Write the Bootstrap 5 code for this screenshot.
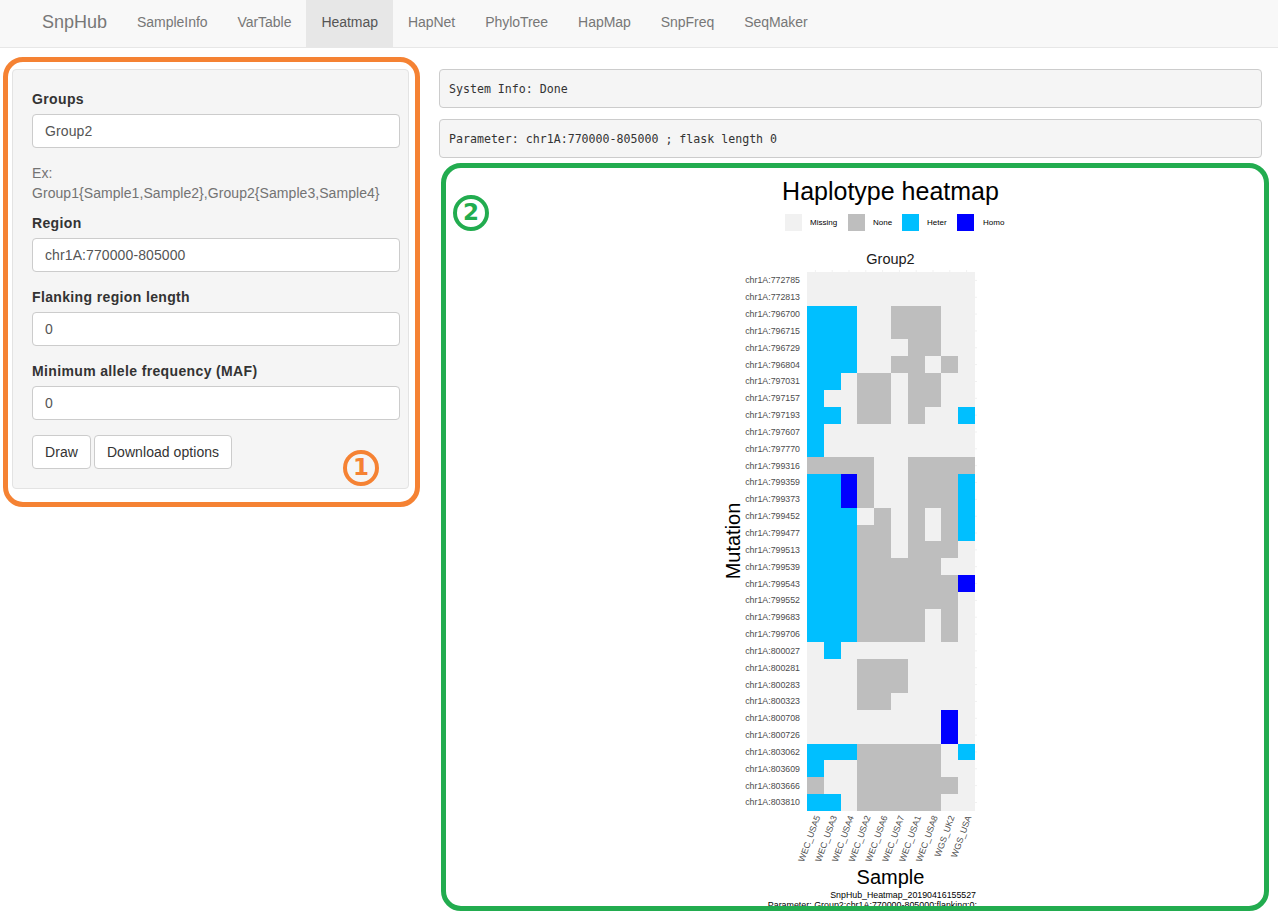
<!DOCTYPE html>
<html lang="en">
<head>
  <meta charset="UTF-8">
  <title>SnpHub - Heatmap</title>
  <meta name="viewport" content="width=device-width, initial-scale=1">
  <link href="https://cdn.jsdelivr.net/npm/bootstrap@5.3.3/dist/css/bootstrap.min.css" rel="stylesheet">
  <style>
    body {
      font-family: "Liberation Sans", Arial, sans-serif;
      font-size: 14px;
      line-height: 20px;
      color: #333;
      background: #fff;
      overflow: hidden;
    }
    .snp-nav {
      height: 48px;
      padding: 0 0 0 27px;
      background: #f8f8f8;
      border-bottom: 1px solid #e7e7e7;
      align-items: stretch;
      justify-content: flex-start;
    }
    .snp-nav .navbar-brand {
      margin: 0;
      padding: 12px 15px;
      font-size: 18px;
      line-height: 20px;
      color: #777;
    }
    .snp-nav .navbar-nav { align-items: stretch; }
    .navbar-expand.snp-nav .navbar-nav .nav-link {
      padding: 12px 15px 15px;
      height: 47px;
      line-height: 20px;
      letter-spacing: -.04px;
      color: #777;
    }
    .navbar-expand.snp-nav .navbar-nav .nav-link.active {
      color: #555;
      background: #e7e7e7;
    }
    .page-wrap {
      padding: 21px 16px 0 12px;
      gap: 30px;
    }
    .side-col { width: 397px; flex: none; }
    .main-col { flex: 1 1 0; min-width: 0; }
    .side-well {
      height: 420px;
      padding: 19px 8px 19px 19px;
      background: #f5f5f5;
      border: 1px solid #e3e3e3;
      border-radius: 4px;
    }
    .side-well .form-label {
      display: block;
      margin: 0 0 5px;
      font-weight: 700;
      line-height: 20px;
      letter-spacing: .36px;
    }
    .side-well .form-control {
      height: 34px;
      padding: 6px 12px;
      font-size: 14px;
      line-height: 20px;
      letter-spacing: .1px;
      color: #555;
      border: 1px solid #ccc;
      border-radius: 4px;
    }
    .field-gap { margin-bottom: 15px; }
    .help-note {
      margin: 15px 0 10px;
      color: #737373;
      line-height: 20px;
      letter-spacing: .06px;
    }
    .btn-row { gap: 3px; }
    .plain-btn {
      height: 34px;
      padding: 6px 12px;
      font-size: 14px;
      line-height: 20px;
      letter-spacing: .06px;
      color: #333;
      background: #fff;
      border: 1px solid #ccc;
      border-radius: 4px;
    }
    .info-box {
      height: 39px;
      margin: 0 0 11px;
      padding: 9px;
      font-family: "DejaVu Sans Mono", "Liberation Mono", monospace;
      font-size: 11.6px;
      line-height: 20px;
      color: #333;
      background: #f5f5f5;
      border: 1px solid #ccc;
      border-radius: 4px;
      overflow: hidden;
    }
    .plot-wrap { height: 748px; margin-top: -6px; }
    .plot-wrap svg { display: block; }
    .plot-wrap text { font-family: "Liberation Sans", Arial, sans-serif; }
    .note-frame {
      position: absolute;
      border-style: solid;
      border-width: 5px;
      border-radius: 20px;
      pointer-events: none;
    }
    .frame-orange { top: -13px; left: -10px; right: -12px; bottom: -19px; border-color: #f58233; }
    .frame-green { top: 0; left: 2px; right: -7px; bottom: 0; border-color: #22ac4f; }
    .note-num {
      position: absolute;
      width: 36px;
      height: 36px;
      border: 4px solid;
      border-radius: 50%;
      font-family: "DejaVu Sans", sans-serif;
      font-weight: 700;
      font-size: 23px;
      line-height: 27px;
      text-align: center;
    }
    .num-orange { left: 330px; top: 380px; color: #f58233; }
    .num-green { left: 14px; top: 32px; color: #22ac4f; }
  </style>
</head>
<body>

<nav class="navbar navbar-expand snp-nav">
  <a class="navbar-brand" href="#">SnpHub</a>
  <ul class="navbar-nav">
    <li class="nav-item"><a class="nav-link" href="#">SampleInfo</a></li>
    <li class="nav-item"><a class="nav-link" href="#">VarTable</a></li>
    <li class="nav-item"><a class="nav-link active" href="#">Heatmap</a></li>
    <li class="nav-item"><a class="nav-link" href="#">HapNet</a></li>
    <li class="nav-item"><a class="nav-link" href="#">PhyloTree</a></li>
    <li class="nav-item"><a class="nav-link" href="#">HapMap</a></li>
    <li class="nav-item"><a class="nav-link" href="#">SnpFreq</a></li>
    <li class="nav-item"><a class="nav-link" href="#">SeqMaker</a></li>
  </ul>
</nav>

<div class="d-flex page-wrap">
  <div class="side-col">
    <div class="side-well position-relative">
      <form>
        <label class="form-label" for="groups">Groups</label>
        <input type="text" id="groups" class="form-control" value="Group2">
        <div class="help-note">Ex:<br>Group1{Sample1,Sample2},Group2{Sample3,Sample4}</div>

        <div class="field-gap">
          <label class="form-label" for="region">Region</label>
          <input type="text" id="region" class="form-control" value="chr1A:770000-805000">
        </div>
        <div class="field-gap">
          <label class="form-label" for="flanking">Flanking region length</label>
          <input type="text" id="flanking" class="form-control" value="0">
        </div>
        <div class="field-gap">
          <label class="form-label" for="maf">Minimum allele frequency (MAF)</label>
          <input type="text" id="maf" class="form-control" value="0">
        </div>
        <div class="d-flex btn-row">
          <button type="button" class="btn plain-btn">Draw</button>
          <button type="button" class="btn plain-btn">Download options</button>
        </div>
      </form>
      <div class="note-frame frame-orange"></div>
      <div class="note-num num-orange">1</div>
    </div>
  </div>

  <div class="main-col">
    <pre class="info-box">System Info: Done</pre>
    <pre class="info-box">Parameter: chr1A:770000-805000 ; flask length 0</pre>
    <div class="plot-wrap position-relative">
      <!-- viewBox uses page coordinates, easier to line up with the plot -->
      <svg id="heatmap" width="823" height="748" viewBox="439 163 823 748"></svg>
      <div class="note-frame frame-green"></div>
      <div class="note-num num-green">2</div>
    </div>
  </div>
</div>

<script>
  // . missing, n none, h heter, o homo
  const rows = [
    ["772785", ".........."], ["772813", ".........."], ["796700", "hhh..nnn.."], ["796715", "hhh..nnn.."],
    ["796729", "hhh...nn.."], ["796804", "hhh..nn.n."], ["797031", "hh.nn.nn.."], ["797157", "h..nn.nn.."],
    ["797193", "hh.nn.n..h"], ["797607", "h........."], ["797770", "h........."], ["799316", "nnnn..nnnn"],
    ["799359", "hhon..nnnh"], ["799373", "hhon..nnnh"], ["799452", "hhh.n.n.nh"], ["799477", "hhhnn.n.nh"],
    ["799513", "hhhnn.nnn."], ["799539", "hhhnnnnn.."], ["799543", "hhhnnnnnno"], ["799552", "hhhnnnnnn."],
    ["799683", "hhhnnnn.n."], ["799706", "hhhnnnn.n."], ["800027", ".h........"], ["800281", "...nnn...."],
    ["800283", "...nnn...."], ["800323", "...nn....."], ["800708", "........o."], ["800726", "........o."],
    ["803062", "hhhnnnnn.h"], ["803609", "h..nnnnn.."], ["803666", "n..nnnnnn."], ["803810", "hh.nnnnn.."]
  ];
  const samples = ["WEC_USA5", "WEC_USA3", "WEC_USA4", "WEC_USA2", "WEC_USA6", "WEC_USA7", "WEC_USA1", "WEC_USA8", "WGS_UK2", "WGS_USA"];
  const colors = { ".": "#f1f1f1", n: "#bebebe", h: "#00bfff", o: "#0000ff" };

  const x0 = 807, y0 = 272, cw = 16.8, ch = 16.84;
  let out = "";

  out += `<text x="890.5" y="200" font-size="25" text-anchor="middle" fill="#000">Haplotype heatmap</text>`;

  // legend
  [[785, "Missing", 810, colors["."]], [848, "None", 873, colors.n], [902, "Heter", 927, colors.h], [957, "Homo", 983, colors.o]].forEach(l => {
    out += `<rect x="${l[0]}" y="214" width="17" height="17" fill="${l[3]}"/>`;
    out += `<text x="${l[2]}" y="225" font-size="8" fill="#000">${l[1]}</text>`;
  });

  out += `<text x="890.5" y="264" font-size="14.5" text-anchor="middle" fill="#1a1a1a">Group2</text>`;

  // background and cells
  out += `<rect x="${x0}" y="${y0}" width="168" height="539" fill="${colors["."]}"/>`;
  rows.forEach((r, i) => {
    const cy = y0 + ch * i;
    for (let j = 0; j < 10; j++) {
      if (r[1][j] !== ".") {
        out += `<rect x="${x0 + cw * j}" y="${cy}" width="${cw}" height="${ch}" fill="${colors[r[1][j]]}" shape-rendering="crispEdges"/>`;
      }
    }
    out += `<text x="800" y="${cy + 11.4}" font-size="8.8" text-anchor="end" fill="#4d4d4d">chr1A:${r[0]}</text>`;
    // faint tick on the right side
    out += `<line x1="975" x2="977" y1="${cy + ch / 2}" y2="${cy + ch / 2}" stroke="#f1f1f1"/>`;
  });

  samples.forEach((s, j) => {
    const cx = x0 + cw * (j + 0.5);
    out += `<line x1="${cx}" x2="${cx}" y1="270" y2="272" stroke="#f1f1f1"/>`;
    out += `<text transform="translate(${cx + 5} 817) rotate(-70)" font-size="8.8" text-anchor="end" fill="#4d4d4d">${s}</text>`;
  });

  out += `<text transform="translate(740 541) rotate(-90)" font-size="20" text-anchor="middle" fill="#000">Mutation</text>`;
  out += `<text x="890.5" y="884" font-size="20" text-anchor="middle" fill="#000">Sample</text>`;
  out += `<text x="976" y="898" font-size="8.8" text-anchor="end" fill="#000">SnpHub_Heatmap_20190416155527</text>`;
  out += `<text x="977" y="908" font-size="8.9" text-anchor="end" fill="#000">Parameter: Group2:chr1A:770000-805000:flanking:0;</text>`;

  document.getElementById("heatmap").innerHTML = out;
</script>
<script src="https://cdn.jsdelivr.net/npm/bootstrap@5.3.3/dist/js/bootstrap.bundle.min.js"></script>
</body>
</html>
